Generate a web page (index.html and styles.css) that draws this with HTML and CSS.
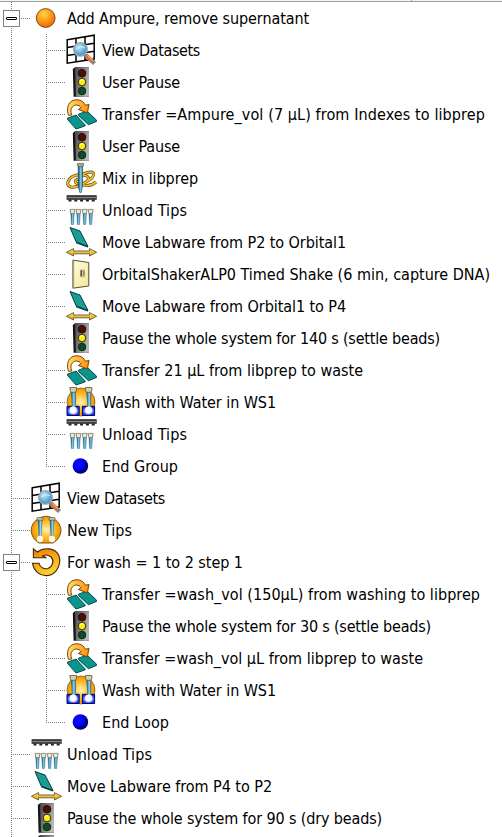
FILE: index.html
```
<!DOCTYPE html>
<html lang="en">
<head>
<meta charset="utf-8">
<title>Method steps</title>
<link rel="stylesheet" href="styles.css">
</head>
<body>
<svg class="defs" width="0" height="0" aria-hidden="true">
  <defs>
    <radialGradient id="orange" cx=".4" cy=".3" r=".75"><stop offset="0" stop-color="#ffd64a"/><stop offset=".5" stop-color="#ff9a16"/><stop offset="1" stop-color="#ee6200"/></radialGradient>
    <radialGradient id="gold"><stop offset="0" stop-color="#fff2b0"/><stop offset=".65" stop-color="#ffb51c"/><stop offset="1" stop-color="#e99500"/></radialGradient>
    <radialGradient id="blue" cx=".4" cy=".38"><stop offset="0" stop-color="#1010ff"/><stop offset=".75" stop-color="#0000f4"/><stop offset="1" stop-color="#000070"/></radialGradient>
    <radialGradient id="lens" cx=".4" cy=".35"><stop offset="0" stop-color="#c8eafa"/><stop offset="1" stop-color="#589fcc"/></radialGradient>
    <linearGradient id="metal" y2=".5"><stop offset="0" stop-color="#444"/><stop offset="1" stop-color="#b8b8b8"/></linearGradient>
    <linearGradient id="arrow"><stop offset="0" stop-color="#ffe36a"/><stop offset="1" stop-color="#ff9000"/></linearGradient>
    <linearGradient id="shaft" x2="0" y2="1"><stop offset="0" stop-color="#ffe477"/><stop offset="1" stop-color="#e39b00"/></linearGradient>
    <linearGradient id="paper" x2="1" y2="1"><stop offset="0" stop-color="#fffde0"/><stop offset="1" stop-color="#f3e591"/></linearGradient>
    <linearGradient id="tube"><stop offset="0" stop-color="#183a50"/><stop offset=".35" stop-color="#3ba0cc"/><stop offset=".6" stop-color="#9bd8ee"/><stop offset="1" stop-color="#205878"/></linearGradient>
    <radialGradient id="glow"><stop offset="0" stop-color="#fff"/><stop offset=".4" stop-color="#eef2ff"/><stop offset="1" stop-color="#1a2cff"/></radialGradient>
    <linearGradient id="loop" x2=".4" y2="1"><stop offset="0" stop-color="#f47a00"/><stop offset="1" stop-color="#ffd02c"/></linearGradient>
  </defs>
  <symbol id="group" viewBox="0 0 32 32"><circle cx="15.7" cy="16" r="9.4" fill="url(#orange)" stroke="#70401c" stroke-width=".9"/></symbol>
  <symbol id="end" viewBox="0 0 32 32"><circle cx="15.4" cy="16" r="7.8" fill="url(#blue)"/></symbol>
  <symbol id="data" viewBox="0 0 32 32">
    <path d="M2.2 5.8 29.2 1.2V25L2.2 29.2ZM11 4.3V27.8M20 2.8V26.4M2.2 13.6 29.2 9.2M2.2 21.4 29.2 17.2" fill="#fff" stroke="#000" stroke-width="1.5"/>
    <path d="m20.5 21 9 8.5" stroke="#888" stroke-width="4.4"/><path d="m21.5 21.5 6 5.8" stroke="#f46a24" stroke-width="3.4"/><path d="m22.5 21.5 5.2 5" stroke="#ffc09a" stroke-width="1"/>
    <circle cx="15.4" cy="15.4" r="6.9" fill="url(#lens)" stroke="#9aa9b2" stroke-width="1.1"/><path d="M11 15q5-4 9-1" fill="none" stroke="#d8f2ff"/>
  </symbol>
  <symbol id="light" viewBox="0 0 32 32">
    <path d="M7.8 3 10 1.2H24V30.8H8.6Z" fill="#161616"/><path d="M10 1.2H24V30.8H11Z" fill="url(#metal)"/>
    <circle cx="17" cy="7.2" r="3.8" fill="#520b0b" stroke="#1d1010"/><circle cx="17" cy="16" r="3.8" fill="#fff000" stroke="#2b2a10"/><circle cx="17" cy="25" r="3.8" fill="#085022" stroke="#122417"/><path d="M15 15q1-2 3-1" stroke="#fff" fill="none"/>
  </symbol>
  <symbol id="transfer" viewBox="0 0 32 32">
    <path d="M2.6 20 11 17.1 20.2 27 20 28 11 31 2.6 21.5ZM13.4 16.2 22 13 31.6 22.2V23.4L23.5 26.7 13.4 17.5Z" fill="#08938b" stroke="#073f40" stroke-width=".9"/>
    <path d="m4.5 20 8 8.5M8 19l8 8.5M16 16.5l8 8M20 15l8 8" stroke="#2bb0a5" stroke-width=".6" stroke-dasharray="1 1"/>
    <path d="M3.6 17.3C1.8 13 2 7 6 3.6 11 .2 18 1.6 20.6 7.4L24 6.2 22.4 15 13.3 11.4 16.3 9.8C14 6.4 9.6 6.2 7.3 9 5.4 11 5.6 13.6 6.8 17Z" fill="url(#arrow)" stroke="#784010" stroke-width="1"/>
  </symbol>
  <symbol id="mix" viewBox="0 0 32 32">
    <g fill="none"><path id="swirl" d="M18 12Q28 8 28.5 12 29 16 21 20 12 26 6 25 0 23 4.500 17 9 12 18 13 25 14 23 18 19 23 12 21.500 8 19 13 17M15 22Q24 26 31 20" stroke="#69490c" stroke-width="3"/><path d="M18 12Q28 8 28.5 12 29 16 21 20 12 26 6 25 0 23 4.500 17 9 12 18 13 25 14 23 18 19 23 12 21.500 8 19 13 17M15 22Q24 26 31 20" stroke="#f3be2c" stroke-width="1.7"/></g>
    <path d="M13.2 4h4.4v20l-1.4 6.500h-1.400L13.200 24z" fill="url(#tube)" stroke="#1d4c6a" stroke-width=".6"/><path d="M12.4 1.4h6.2v2.400h-1v1h-4v-1h-1.2z" fill="#a9a792" stroke="#62604d" stroke-width=".7"/>
  </symbol>
  <symbol id="unload" viewBox="0 0 32 32">
    <path d="M1.6 1.2H31.7V5.8H1.6Z" fill="#282828"/><path d="M2.3 2.800H31v1.5H2.3Z" fill="#858585"/><path d="M3.5 6.5H30" stroke="#222" stroke-width="1.8" stroke-dasharray="3 2.8"/>
    <g id="tips"><path d="M5.7 17.5h3.6L8.6 30.5H6.4Z" fill="url(#tube)" stroke="#2b6580" stroke-width=".4"/><path d="M5 15.4h5l-.8 4.2H5.8Z" fill="#eeecd0" stroke="#77776a" stroke-width=".8"/></g>
    <use href="#tips" x="6"/><use href="#tips" x="12.2"/><use href="#tips" x="18.2"/>
  </symbol>
  <symbol id="move" viewBox="0 0 32 32">
    <path d="M5 1.5 15 5 23 20.5 11.3 16.2Z" fill="#12998f" stroke="#0a3e40" stroke-width="1"/><path d="M11.3 16.6 23 21" stroke="#063536" stroke-width="1.3"/><path d="m8 4 6 12M11 5l7 13M14 6l6 12" stroke="#4abdb3" stroke-width=".6" stroke-dasharray="1 1"/>
    <path d="M1.3 26.3 8.5 22.6V25H24.5V22.6L31.7 26.3 24.5 30V27.8H8.5V30Z" fill="url(#shaft)" stroke="#6b5b35" stroke-width=".9"/>
  </symbol>
  <symbol id="shake" viewBox="0 0 32 32"><path d="M7.9 2.1 23.8 4.5V28L7.9 30.2Z" fill="url(#paper)" stroke="#56513c" stroke-width="1"/><path d="M8.7 3V29.5" stroke="#a89d68"/><path d="M15.7 12h3.7v6.7h-3.7z" fill="#e3daa0" stroke="#8a815c" stroke-width=".6"/><path d="M16.200 12.400V18.200" stroke="#222"/><path d="M17.600 13.700h1.200v3h-1.200" stroke="#444" stroke-width=".7" fill="none"/></symbol>
  <symbol id="wash" viewBox="0 0 32 32">
    <ellipse cx="16" cy="16" rx="14" ry="14" fill="url(#gold)" stroke="#976616" stroke-width=".8"/>
    <g id="washtube"><path d="M2 20.3H14.2V29.5H2Z" fill="url(#glow)" stroke="#000760" stroke-width="1"/><path d="M6 4h4.8v14l-1 5H7Z" fill="url(#tube)"/><circle cx="8.2" cy="24" r="3.4" fill="#fff"/><path d="M5 1.5h6.5V4l-1 2.3H6L5 4Z" fill="#d5d1ae" stroke="#555544" stroke-width=".8"/></g>
    <use href="#washtube" x="15.4"/>
  </symbol>
  <symbol id="newtips" viewBox="0 0 32 32">
    <path d="M8 5Q16-.5 24 5 31 9 31 17 30 25 23 29H9Q2 25 1.2 17 1 9 8 5Z" fill="url(#gold)" stroke="#7d5519" stroke-width="1"/>
    <g id="newtube"><path d="M7.8 5h4.6L11.5 22q-.4 3-1.4 3t-1.4-3Z" fill="url(#tube)"/><circle cx="10" cy="25" r="3.2" fill="#fff" opacity=".9"/><path d="M7 3.7h6v2.5H7Z" fill="#d5d1ae" stroke="#555544" stroke-width=".7"/></g><use href="#newtube" x="12"/>
  </symbol>
  <symbol id="repeat" viewBox="0 0 32 32"><path d="M3.400 2.800 7.200 6C14 .8 25 1.800 28.600 9 32 17 27.400 27.400 18.700 29.400 10.400 30.800 3.700 25.300 2.500 17.200H9C10 21.500 14 23.500 18 22.500 23 20.400 24.400 14.400 21 11 18.400 9 15 8.600 12.500 10L16.500 11.800 3.400 11.800Z" fill="url(#loop)" stroke="#3c2810" stroke-width="1.1"/></symbol>
</svg>
<header class="header"><span class="header-cell"></span><span class="header-cell"></span></header>
<main class="tree" id="tree"></main>
<script src="tree.js"></script>
</body>
</html>
```
FILE: styles.css
```
*, *::before { box-sizing: border-box; }
html, body { height: 100%; }
body { margin: 0; background: #fff; color: #000; overflow: hidden; font: 16px/34px "DejaVu Sans Condensed", "DejaVu Sans", sans-serif; font-stretch: condensed; }
.defs { display: block; height: 0; }
.header { display: flex; height: 2px; background: #f4f4f4; border-bottom: 1px solid #a0a0a0; }
.header-cell:first-child { width: 412px; border-right: 1px solid #a0a0a0; }
.tree { --dot: #808080; }
.row { display: flex; height: 32px; white-space: pre; }
.guide { flex: none; width: 30px; height: 32px; background: repeating-linear-gradient(var(--dot) 0 1px, transparent 1px 2px) 11px 0 / 1px 100% no-repeat; }
.guide.branch { background: repeating-linear-gradient(var(--dot) 0 1px, transparent 1px 2px) 11px 0 / 1px 100% no-repeat, repeating-linear-gradient(90deg, var(--dot) 0 1px, transparent 1px 2px) 13px 16px / 17px 1px no-repeat; }
.guide.inner { width: 35px; background: repeating-linear-gradient(var(--dot) 0 1px, transparent 1px 2px) 16px 0 / 1px 100% no-repeat, repeating-linear-gradient(90deg, var(--dot) 0 1px, transparent 1px 2px) 18px 16px / 17px 1px no-repeat; }
.guide.last { background-size: 1px 17px, 17px 1px; }
.toggle { display: block; margin: 8px 0 0 3px; width: 17px; height: 17px; border: 1px solid #808080; background: #fff; padding: 6px 2px; }
.toggle::before { content: ""; display: block; width: 11px; height: 3px; border: 1px solid #000; border-radius: 1px; }
.icon { flex: none; width: 32px; height: 32px; }
.label { height: 32px; margin-left: 5px; }
```
FILE: tree.js
```
// Each step: depth, icon, label, label width, optional state
const steps = [
  [0, "group", "Add Ampure, remove supernatant", 242, "open"],
  [1, "data", "View Datasets", 98],
  [1, "light", "User Pause", 78],
  [1, "transfer", "Transfer =Ampure_vol (7 µL) from Indexes to libprep", 383],
  [1, "light", "User Pause", 78],
  [1, "mix", "Mix in libprep", 96],
  [1, "unload", "Unload Tips", 85],
  [1, "move", "Move Labware from P2 to Orbital1", 244],
  [1, "shake", "OrbitalShakerALP0 Timed Shake (6 min, capture DNA)", 388],
  [1, "move", "Move Labware from Orbital1 to P4", 244],
  [1, "light", "Pause the whole system for 140 s (settle beads)", 338],
  [1, "transfer", "Transfer 21 µL from libprep to waste", 261],
  [1, "wash", "Wash with Water in WS1", 174],
  [1, "unload", "Unload Tips", 85],
  [1, "end", "End Group", 76, "last"],
  [0, "data", "View Datasets", 98],
  [0, "newtips", "New Tips", 65],
  [0, "repeat", "For wash = 1 to 2 step 1", 176, "open"],
  [1, "transfer", "Transfer =wash_vol (150µL) from washing to libprep", 378],
  [1, "light", "Pause the whole system for 30 s (settle beads)", 329],
  [1, "transfer", "Transfer =wash_vol µL from libprep to waste", 321],
  [1, "wash", "Wash with Water in WS1", 174],
  [1, "end", "End Loop", 67, "last"],
  [0, "unload", "Unload Tips", 85],
  [0, "move", "Move Labware from P4 to P2", 205],
  [0, "light", "Pause the whole system for 90 s (dry beads)", 315],
  [0, "light", "", 0]
];
const tree = document.getElementById("tree");
for (const [depth, icon, text, width, state] of steps) {
  const row = document.createElement("div");
  row.className = "row";
  const toggle = state === "open" ? '<span class="toggle"></span>' : "";
  const inner = depth ? `<span class="guide inner ${state === "last" ? "last" : ""}"></span>` : "";
  row.innerHTML = `<span class="guide ${depth ? "" : "branch"}">${toggle}</span>${inner}<svg class="icon"><use href="#${icon}"/></svg><span class="label"></span>`;
  const label = row.querySelector(".label");
  label.textContent = text;
  tree.append(row);
  if (text) {
    label.style.letterSpacing = (width - label.getBoundingClientRect().width) / text.length + "px";
  }
}
```
